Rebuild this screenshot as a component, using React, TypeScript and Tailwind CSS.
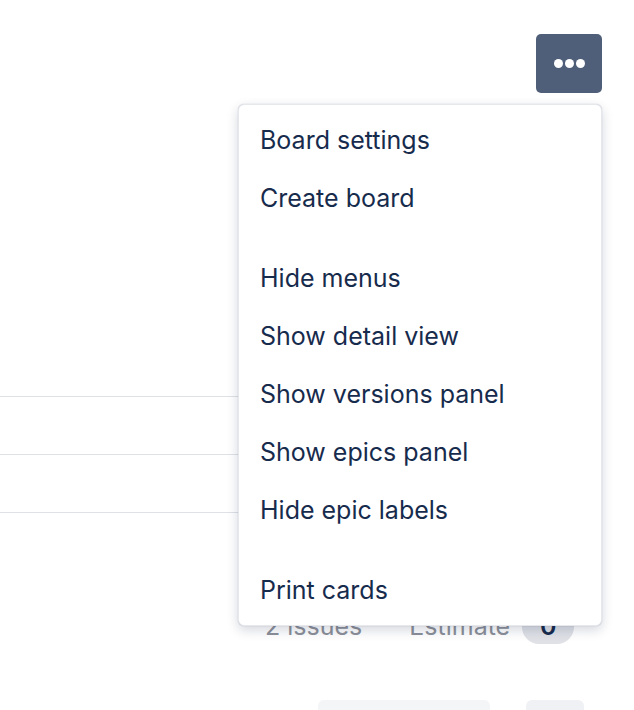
const sections = [
  ["Board settings", "Create board"],
  ["Hide menus", "Show detail view", "Show versions panel", "Show epics panel", "Hide epic labels"],
  ["Print cards"],
];

export default function App() {
  return (
    <div className="relative h-[710px] w-[634px] overflow-hidden bg-white font-['Inter','Liberation_Sans',sans-serif] text-[#172b4d]">
      <div className="flex justify-end pt-[34px] pr-[32px]">
        <button className="flex h-[59px] w-[66px] items-center justify-center gap-[2px] rounded-[5px] bg-[#505f79]">
          <span className="h-[9px] w-[9px] rounded-full bg-white" />
          <span className="h-[9px] w-[9px] rounded-full bg-white" />
          <span className="h-[9px] w-[9px] rounded-full bg-white" />
        </button>
      </div>

      <div className="mt-[246px] mr-[50px]">
        <div className="h-[58px] border-b border-[#dfe1e6]" />
        <div className="h-[58px] border-b border-[#dfe1e6]" />
        <div className="h-[58px] border-b border-[#dfe1e6]" />
      </div>

      <div className="mt-[97px] flex h-[34px] items-center pl-[265px] text-[25px] text-[#8c9099]">
        <span>2 issues</span>
        <span className="ml-[47px]">Estimate</span>
        <span className="ml-[12px] flex h-[34px] w-[52px] items-center justify-center rounded-full bg-[#dfe1e6] font-semibold text-[#172b4d]">
          0
        </span>
      </div>

      <div className="mt-[56px] flex gap-[36px] pl-[318px]">
        <div className="h-[40px] w-[172px] rounded-[6px] bg-[#f4f5f7]" />
        <div className="h-[40px] w-[58px] rounded-[6px] bg-[#f0f1f4]" />
      </div>

      <div className="absolute top-[104px] left-[238px] w-[364px] rounded-[6px] border border-[#e6e8ec] bg-white py-[6px] shadow-[0_4px_12px_rgba(9,30,66,0.18),0_0_1px_rgba(9,30,66,0.3)]">
        {sections.map((items, i) => (
          <div key={i} className={i > 0 ? "mt-[22px]" : ""}>
            {items.map((label) => (
              <div key={label} className="flex h-[58px] items-center px-[21px] text-[25px] leading-none">
                {label}
              </div>
            ))}
          </div>
        ))}
      </div>
    </div>
  );
}
